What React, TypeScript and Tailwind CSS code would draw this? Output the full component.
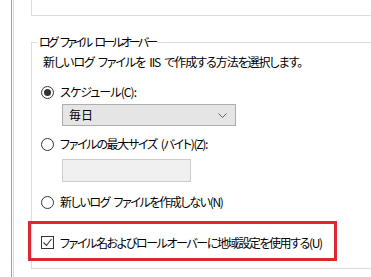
import React from 'react';

// words separated by a visible gap (negative tracking swallows a normal space)
const Words: React.FC<{ words: string[]; className?: string }> = ({ words, className }) => (
  <span className={`flex gap-[4px] leading-[16px] whitespace-nowrap ${className ?? ''}`}>
    {words.map((w, i) => (
      <span key={i}>{w}</span>
    ))}
  </span>
);

const Radio: React.FC<{ checked?: boolean; words: string[]; track: string }> = ({ checked, words, track }) => (
  <div className="flex items-center h-[16px]">
    <span className="w-[13px] h-[13px] shrink-0 rounded-full border border-[#333333] bg-white flex items-center justify-center">
      {checked && <span className="w-[7px] h-[7px] rounded-full bg-[#333333]" />}
    </span>
    <Words words={words} className={`ml-[6px] ${track}`} />
  </div>
);

const App: React.FC = () => {
  return (
    <div className="w-[371px] h-[277px] bg-white flex overflow-hidden text-[12px] text-black font-['Noto_Sans_CJK_JP','Noto_Sans',sans-serif] [font-feature-settings:'palt']">
      <div className="w-[11px] shrink-0" />
      <div className="w-px shrink-0 bg-[#a0a0a0]" />
      <div className="w-px shrink-0" />
      <div className="w-px shrink-0 bg-[#d9d9d9]" />
      <div className="flex-1 pl-[17px] flex flex-col">
        <div className="h-[16px] border-l border-b border-[#dcdcdc] -mr-[10px]" />

        <div className="relative mt-[26px] border border-[#dcdcdc] -mr-[10px] pl-[9px] pb-[7px]">
          <span className="absolute -top-[9px] left-[5px] px-[2px] bg-white">
            <Words words={['ログ', 'ファイル', 'ロールオーバー']} className="tracking-[-2.8px]" />
          </span>

          <div className="mt-[11px] ml-[2px] flex">
            <Words
              words={['新しいログ', 'ファイルを', 'IIS', 'で作成する方法を選択します。']}
              className="tracking-[-1.05px]"
            />
          </div>

          <div className="mt-[14px]">
            <Radio checked words={['スケジュール(C):']} track="tracking-[-0.9px]" />
          </div>
          <div className="mt-[4px] ml-[21px] w-[174px] h-[22px] bg-[#e5e5e5] border border-[#adadad] flex items-center justify-between pl-[6px] pr-[8px]">
            <span className="leading-[16px]">毎日</span>
            <svg width="9" height="5" viewBox="0 0 9 5" fill="none">
              <path d="M0.5 0.5 L4.5 4.5 L8.5 0.5" stroke="#606060" strokeWidth="1" />
            </svg>
          </div>

          <div className="mt-[10px]">
            <Radio words={['ファイルの最大サイズ', '(バイト)(Z):']} track="tracking-[-1.3px]" />
          </div>
          <div className="mt-[7px] ml-[21px] w-[129px] h-[23px] bg-[#f0f0f0] border border-[#cccccc]" />

          <div className="mt-[12px]">
            <Radio words={['新しいログ', 'ファイルを作成しない(N)']} track="tracking-[-1.35px]" />
          </div>

          <div className="mt-[11px] -ml-[13px] w-[309px] h-[40px] border-[3px] border-[#dc2832] flex items-center pl-[10px] pt-[3px]">
            <span className="w-[13px] h-[13px] shrink-0 border border-[#333333] bg-white flex items-center justify-center">
              <svg width="11" height="11" viewBox="0 0 11 11" fill="none">
                <path d="M1.5 5.5 L4.5 8.5 L9.5 2" stroke="#333333" strokeWidth="1.1" />
              </svg>
            </span>
            <span className="ml-[6px] leading-[16px] whitespace-nowrap tracking-[-1.4px]">
              ファイル名およびロールオーバーに地域設定を使用する(U)
            </span>
          </div>
        </div>
      </div>
    </div>
  );
};

export default App;
